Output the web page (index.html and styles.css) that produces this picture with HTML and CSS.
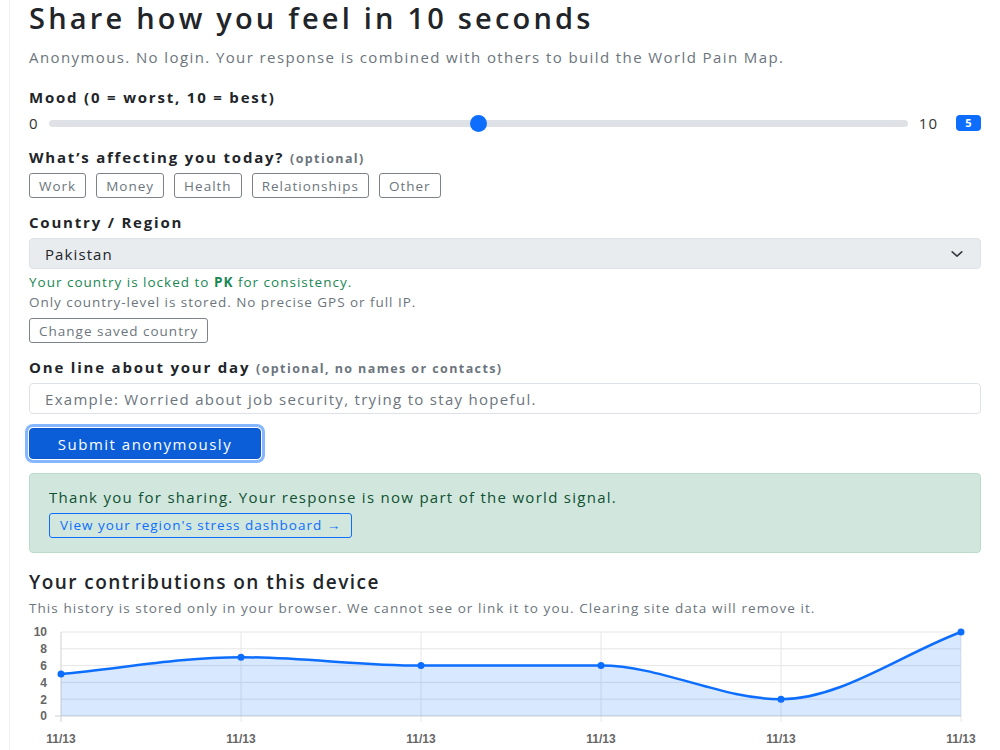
FILE: index.html
```html
<!DOCTYPE html>
<html>
<head>
    <title>Share how you feel</title>
    <meta name="viewport" content="width=device-width, initial-scale=1">
    <link rel="stylesheet" href="styles.css">
</head>
<body>
    <div class="page">
        <h1>Share how you feel in 10 seconds</h1>
        <p class="lead">Anonymous. No login. Your response is combined with others to build the World Pain Map.</p>

        <label class="field-label mood-label" for="mood">Mood (0 = worst, 10 = best)</label>
        <div class="slider-row">
            <span class="range-end">0</span>
            <input type="range" id="mood" min="0" max="10" value="5">
            <span class="range-end">10</span>
            <span class="badge">5</span>
        </div>

        <div class="field-label section">What’s affecting you today? <small>(optional)</small></div>
        <div class="chips">
            <button class="chip">Work</button>
            <button class="chip">Money</button>
            <button class="chip">Health</button>
            <button class="chip">Relationships</button>
            <button class="chip">Other</button>
        </div>

        <label class="field-label section" for="country">Country / Region</label>
        <div class="select" id="country">
            <span>Pakistan</span>
            <svg width="14" height="14" viewBox="0 0 16 16"><path d="M2.5 5.5l5.5 5 5.5-5" fill="none" stroke="#343a40" stroke-width="1.8" stroke-linecap="round" stroke-linejoin="round"/></svg>
        </div>
        <div class="locked">Your country is locked to <b>PK</b> for consistency.</div>
        <div class="note">Only country-level is stored. No precise GPS or full IP.</div>
        <button class="chip change-btn">Change saved country</button>

        <label class="field-label section" for="day">One line about your day <small>(optional, no names or contacts)</small></label>
        <input class="text-input" type="text" id="day" placeholder="Example: Worried about job security, trying to stay hopeful.">

        <button class="submit">Submit anonymously</button>

        <div class="alert">
            <div class="alert-text">Thank you for sharing. Your response is now part of the world signal.</div>
            <a class="alert-link" href="#">View your region's stress dashboard →</a>
        </div>

        <h2>Your contributions on this device</h2>
        <div class="note history-note">This history is stored only in your browser. We cannot see or link it to you. Clearing site data will remove it.</div>

        <svg class="chart" width="952" height="125" viewBox="0 0 952 125">
            <g stroke="#e6e6e6" stroke-width="1">
                <line x1="32" y1="7" x2="932" y2="7"/>
                <line x1="32" y1="23.8" x2="932" y2="23.8"/>
                <line x1="32" y1="40.6" x2="932" y2="40.6"/>
                <line x1="32" y1="57.4" x2="932" y2="57.4"/>
                <line x1="32" y1="74.2" x2="932" y2="74.2"/>
                <line x1="212" y1="7" x2="212" y2="97"/>
                <line x1="392" y1="7" x2="392" y2="97"/>
                <line x1="572" y1="7" x2="572" y2="97"/>
                <line x1="752" y1="7" x2="752" y2="97"/>
                <line x1="932" y1="7" x2="932" y2="97"/>
            </g>
            <g stroke="#d0d0d0" stroke-width="1">
                <line x1="32" y1="7" x2="32" y2="97"/>
                <line x1="26" y1="91" x2="932" y2="91"/>
            </g>
            <path d="M32,49 C92,43.4 152,32.2 212,32.2 C272,32.2 332,40.6 392,40.6 C452,40.6 512,40.6 572,40.6 C632,40.6 692,74.2 752,74.2 C812,74.2 872,29.4 932,7 L932,91 L32,91 Z" fill="rgba(13,110,253,0.16)"/>
            <path d="M32,49 C92,43.4 152,32.2 212,32.2 C272,32.2 332,40.6 392,40.6 C452,40.6 512,40.6 572,40.6 C632,40.6 692,74.2 752,74.2 C812,74.2 872,29.4 932,7" fill="none" stroke="#0d6efd" stroke-width="2.5"/>
            <g fill="#0d6efd">
                <circle cx="32" cy="49" r="3.5"/>
                <circle cx="212" cy="32.2" r="3.5"/>
                <circle cx="392" cy="40.6" r="3.5"/>
                <circle cx="572" cy="40.6" r="3.5"/>
                <circle cx="752" cy="74.2" r="3.5"/>
                <circle cx="932" cy="7" r="3.5"/>
            </g>
            <g class="axis" text-anchor="end">
                <text x="18" y="11">10</text>
                <text x="18" y="28">8</text>
                <text x="18" y="45">6</text>
                <text x="18" y="62">4</text>
                <text x="18" y="79">2</text>
                <text x="18" y="95">0</text>
            </g>
            <g class="axis" text-anchor="middle">
                <text x="32" y="118">11/13</text>
                <text x="212" y="118">11/13</text>
                <text x="392" y="118">11/13</text>
                <text x="572" y="118">11/13</text>
                <text x="752" y="118">11/13</text>
                <text x="932" y="118">11/13</text>
            </g>
        </svg>
    </div>
</body>
</html>
```

FILE: styles.css
```css
body {
    margin: 0;
    font-family: "Open Sans", "Noto Sans", sans-serif;
    color: #212529;
    background: #fff;
}
.page {
    margin-left: 9px;
    border: 1px solid #f0f0f0;
    border-top: none;
    padding: 0 19px;
    width: 952px;
    min-height: 750px;
}
h1 {
    margin: 0;
    font-size: 29px;
    font-weight: 600;
    line-height: 36px;
    letter-spacing: 3.2px;
}
.lead {
    margin: 10px 0 0;
    font-size: 15px;
    line-height: 22px;
    color: #6c757d;
    letter-spacing: 1.4px;
}
.field-label {
    display: block;
    font-size: 15px;
    font-weight: 700;
    line-height: 20px;
    letter-spacing: 1.8px;
}
.field-label small {
    font-size: 12.5px;
    line-height: 1;
    color: #6c757d;
    letter-spacing: 1.4px;
}
.mood-label {
    margin-top: 19px;
}
.section {
    margin-top: 14px;
}
.slider-row {
    display: flex;
    align-items: center;
    height: 20px;
    margin-top: 6px;
    font-size: 15px;
}
.range-end {
    color: #333;
    letter-spacing: 1px;
}
.slider-row input[type=range] {
    flex: 1;
    margin: 0 11px 0 10px;
    height: 16px;
    -webkit-appearance: none;
    appearance: none;
    background: transparent;
}
.slider-row input[type=range]::-webkit-slider-runnable-track {
    height: 7px;
    background: #dee2e6;
    border-radius: 4px;
}
.slider-row input[type=range]::-webkit-slider-thumb {
    -webkit-appearance: none;
    width: 17px;
    height: 17px;
    margin-top: -5px;
    border-radius: 50%;
    background: #0d6efd;
    border: none;
}
.badge {
    margin-left: 18px;
    width: 25px;
    height: 16px;
    border-radius: 4px;
    background: #0d6efd;
    color: #fff;
    font-size: 11px;
    font-weight: 700;
    line-height: 16px;
    text-align: center;
}
.chips {
    display: flex;
    gap: 10px;
    margin-top: 6px;
}
.chip {
    height: 25px;
    padding: 0 9px;
    border: 1px solid #7d8389;
    border-radius: 3px;
    background: #fff;
    color: #6c757d;
    font-family: inherit;
    font-size: 13.5px;
    letter-spacing: 1px;
}
.select {
    display: flex;
    align-items: center;
    justify-content: space-between;
    height: 31px;
    margin-top: 6px;
    padding: 0 16px 0 15px;
    box-sizing: border-box;
    border: 1px solid #dee2e6;
    border-radius: 4px;
    background: #e9ecef;
    font-size: 15px;
    letter-spacing: 1.1px;
}
.locked {
    margin-top: 4px;
    font-size: 13.5px;
    line-height: 18px;
    color: #198754;
    letter-spacing: 1px;
}
.note {
    margin-top: 2px;
    font-size: 13.5px;
    line-height: 18px;
    color: #6c757d;
    letter-spacing: 0.96px;
}
.change-btn {
    display: block;
    margin-top: 7px;
}
.text-input {
    display: block;
    width: 100%;
    height: 31px;
    margin-top: 6px;
    padding: 0 15px;
    box-sizing: border-box;
    border: 1px solid #dee2e6;
    border-radius: 4px;
    font-family: inherit;
    font-size: 15px;
    letter-spacing: 1.3px;
}
.text-input::placeholder {
    color: #6c757d;
}
.submit {
    display: block;
    width: 232px;
    height: 31px;
    margin-top: 14px;
    border: 1px solid #0a58ca;
    border-radius: 4px;
    background: #0b5ed7;
    color: #fff;
    font-family: inherit;
    font-size: 15px;
    letter-spacing: 1.5px;
    box-shadow: 0 0 0 1px #fff, 0 0 0 4px #86b7fe;
}
.alert {
    margin-top: 14px;
    padding: 12px 19px 14px;
    border: 1px solid #badbcc;
    border-radius: 4px;
    background: #d1e7dd;
}
.alert-text {
    font-size: 15px;
    line-height: 22px;
    color: #0f5132;
    letter-spacing: 1.28px;
}
.alert-link {
    display: inline-block;
    margin-top: 5px;
    padding: 0 10px;
    height: 25px;
    line-height: 23px;
    box-sizing: border-box;
    border: 1px solid #0d6efd;
    border-radius: 3px;
    color: #0d6efd;
    font-size: 13.5px;
    letter-spacing: 1px;
    text-decoration: none;
}
h2 {
    margin: 16px 0 0;
    font-size: 19px;
    font-weight: 600;
    line-height: 26px;
    letter-spacing: 1.45px;
}
.history-note {
    margin-top: 4px;
    letter-spacing: 1.07px;
}
.chart {
    display: block;
    margin-top: 8px;
}
.axis {
    font-family: "Liberation Sans", Arial, sans-serif;
    font-size: 12px;
    font-weight: 700;
    fill: #666;
}
```
